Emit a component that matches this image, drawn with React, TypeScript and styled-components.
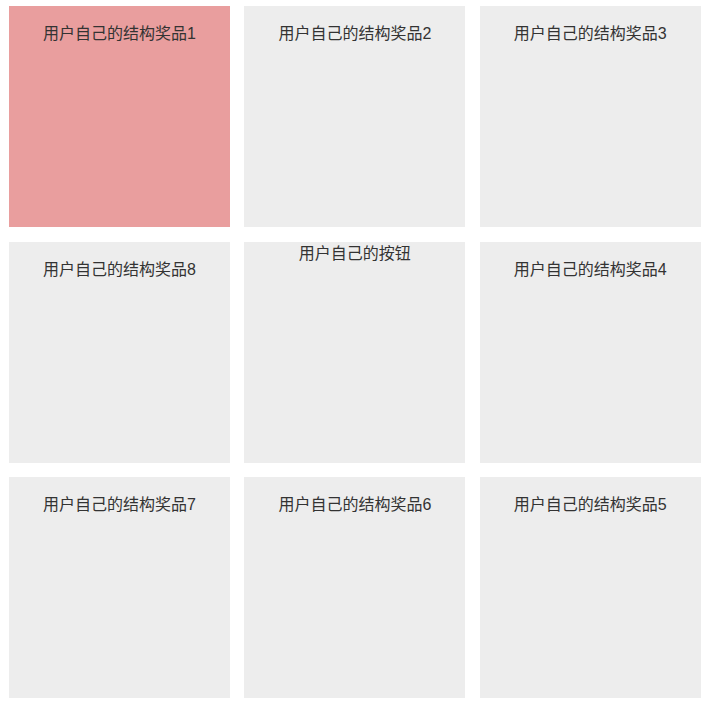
import React from "react";
import styled, { createGlobalStyle } from "styled-components";

const Global = createGlobalStyle`
  html, body { margin: 0; padding: 0; background: #fff; }
  body { font-family: "Liberation Sans", "Noto Sans CJK SC", sans-serif; }
`;

const Board = styled.div`
  display: grid;
  grid-template-columns: 221px 221px 221px;
  grid-auto-rows: 221px;
  column-gap: 14.35px;
  row-gap: 14.5px;
  padding: 6px 8px 0 9px;
`;

const Cell = styled.div<{ $active?: boolean; $button?: boolean }>`
  background: ${(p) => (p.$active ? "#e99e9e" : "#ededed")};
  color: #333;
  font-size: 16px;
  line-height: 22px;
  text-align: center;
  padding-top: ${(p) => (p.$button ? "1px" : "17px")};
  box-sizing: border-box;
`;

const order = [1, 2, 3, 8, 0, 4, 7, 6, 5];

export default function App() {
  return (
    <>
      <Global />
      <Board>
        {order.map((n) =>
          n === 0 ? (
            <Cell key="btn" $button>
              用户自己的按钮
            </Cell>
          ) : (
            <Cell key={n} $active={n === 1}>
              用户自己的结构奖品{n}
            </Cell>
          )
        )}
      </Board>
    </>
  );
}
